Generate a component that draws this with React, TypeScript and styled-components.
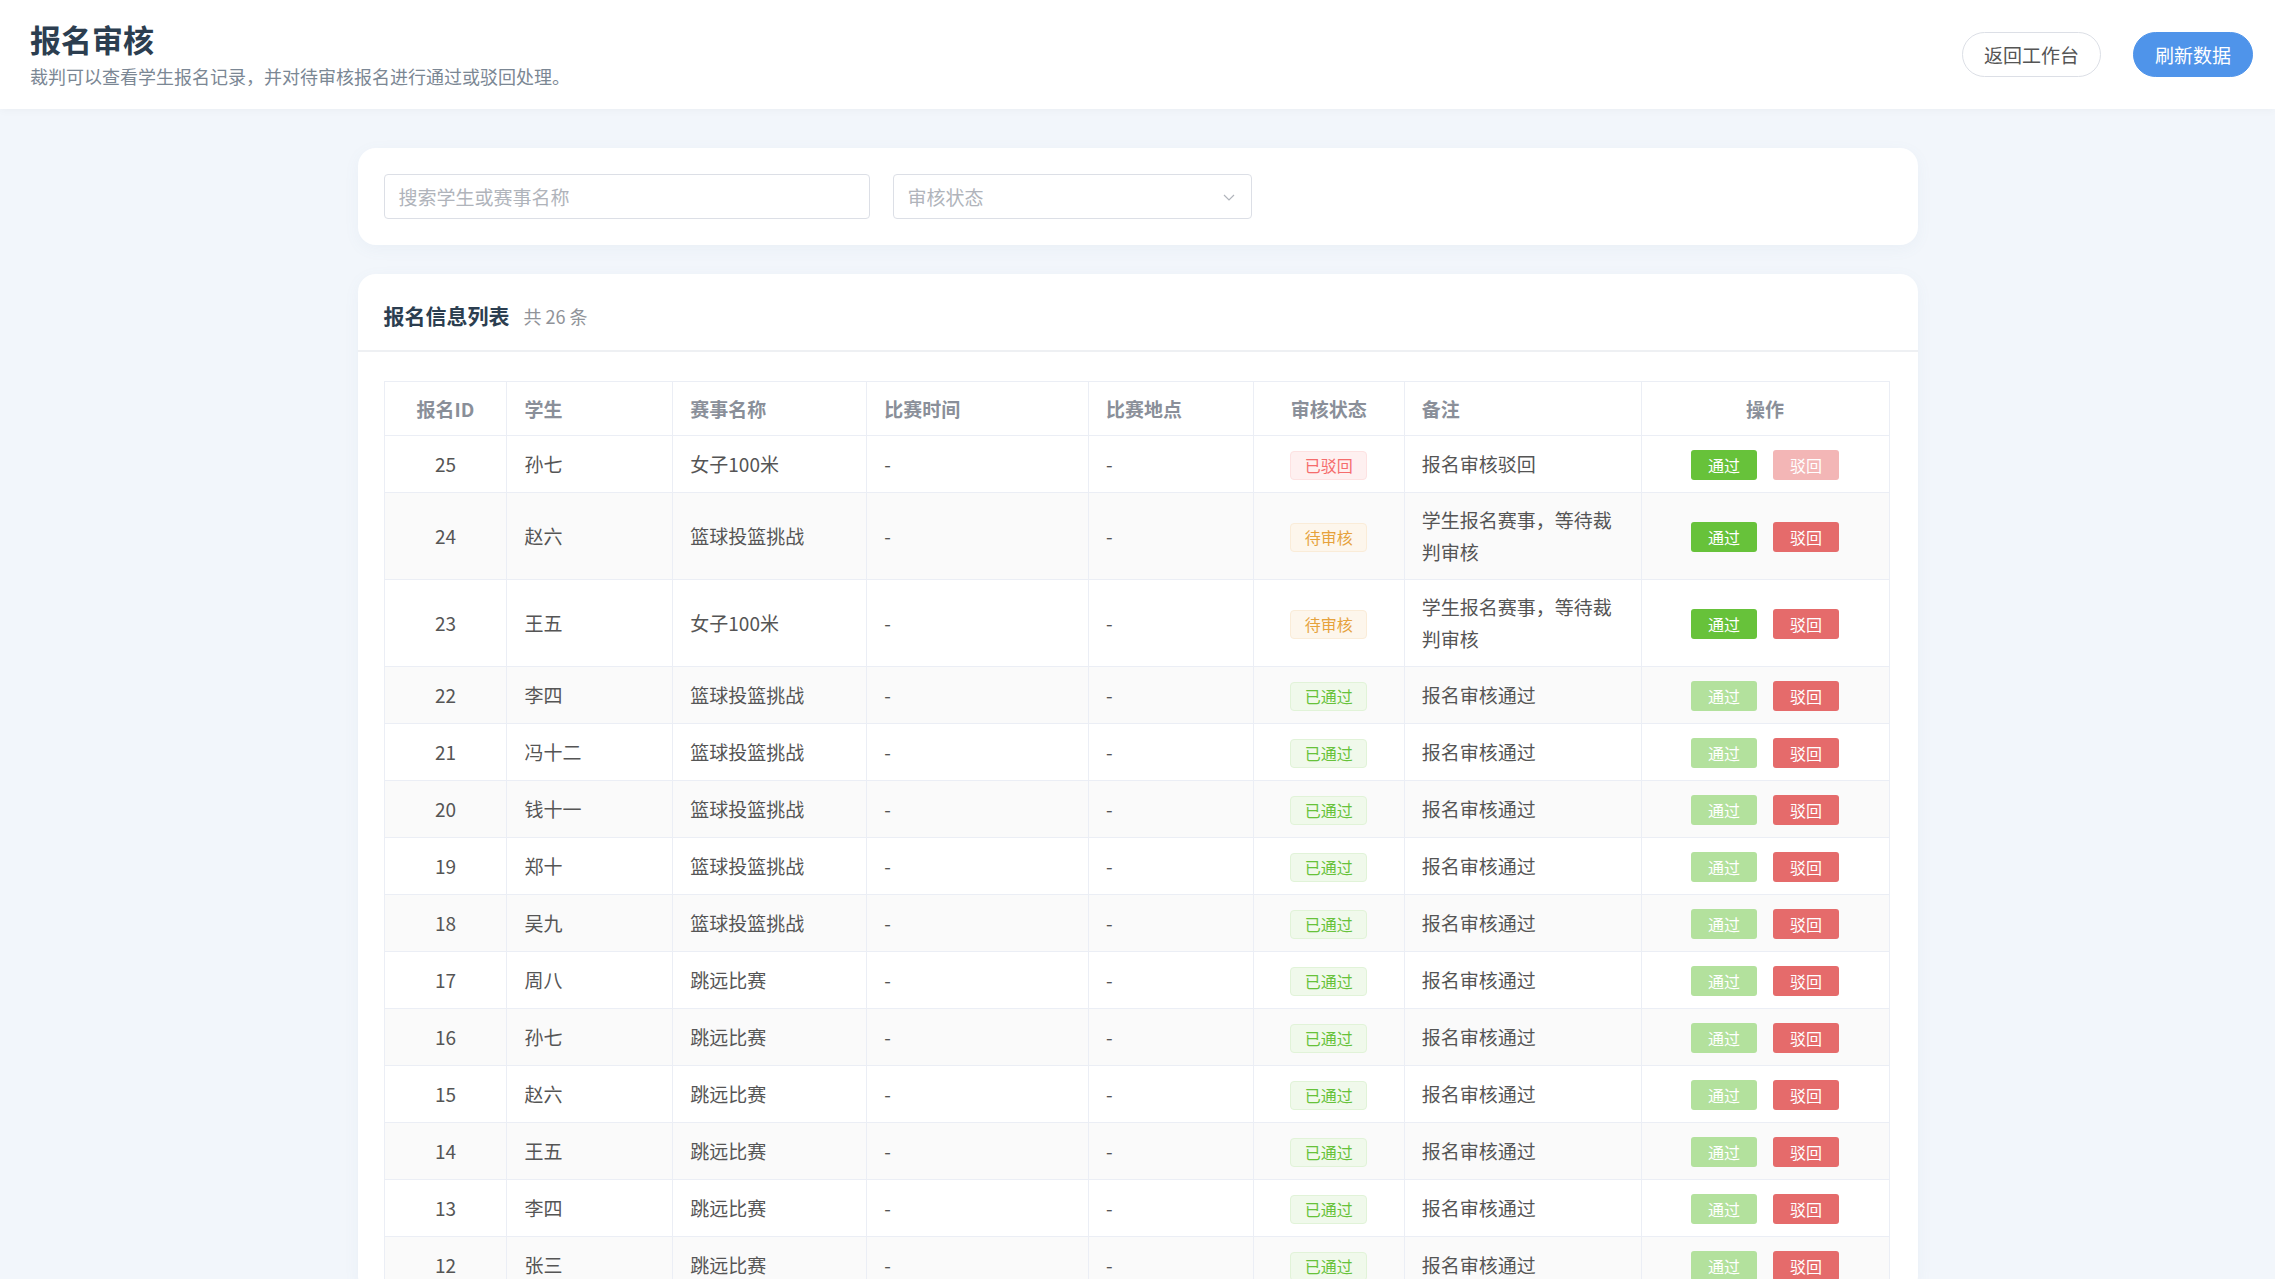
import React from "react";
import styled, { createGlobalStyle } from "styled-components";

const Global = createGlobalStyle`
  html, body { overflow: hidden; }
  body { margin: 0; background: #f2f6fb; font-family: "Noto Sans CJK SC", "Noto Sans", sans-serif; color: #303133; }
`;

const Header = styled.header`
  height: 109px; background: #fff; display: flex; align-items: center; justify-content: space-between;
  padding: 0 22px 0 30px; box-sizing: border-box; box-shadow: 0 2px 8px rgba(0,0,0,0.03);
`;
const Title = styled.h1`margin: 0 0 6px; font-size: 31px; font-weight: 700; color: #2c3e50; line-height: 1.2;`;
const Sub = styled.div`font-size: 18px; color: #7b8794;`;
const Btns = styled.div`display: flex; gap: 32px; align-items: center;`;
const Pill = styled.button<{ $primary?: boolean }>`
  height: 45px; border-radius: 23px; padding: 0 21px; font-size: 19px; font-family: inherit; cursor: pointer;
  border: 1px solid ${p => (p.$primary ? "#4f94ea" : "#dcdfe6")};
  background: ${p => (p.$primary ? "#4f94ea" : "#fff")}; color: ${p => (p.$primary ? "#fff" : "#555")};
`;
const Main = styled.main`width: 1560px; margin: 39px auto 0; display: flex; flex-direction: column; gap: 29px;`;
const Card = styled.section`background: #fff; border-radius: 18px; box-shadow: 0 4px 16px rgba(100,130,170,0.06);`;
const Filter = styled(Card)`display: flex; gap: 23px; padding: 26px 26px 26px;`;
const Input = styled.div<{ $w: number }>`
  width: ${p => p.$w}px; height: 45px; box-sizing: border-box; border: 1px solid #dcdfe6; border-radius: 4px;
  display: flex; align-items: center; justify-content: space-between; padding: 0 14px; font-size: 19px; color: #b0b4bb;
`;
const ListHead = styled.div`display: flex; align-items: baseline; gap: 14px; padding: 26px 26px 20px; border-bottom: 2px solid #eef0f3;`;
const ListTitle = styled.span`font-size: 21px; font-weight: 700; color: #2c3e50;`;
const Count = styled.span`font-size: 18px; color: #909399;`;
const TableWrap = styled.div`padding: 29px 26px 0;`;
const Table = styled.table`width: 1506px; border-collapse: collapse; font-size: 19px; color: #555; border: 1px solid #ebeef5;`;
const Th = styled.th<{ $c?: boolean }>`
  height: 53px; text-align: ${p => (p.$c ? "center" : "left")}; padding: 0 17px; font-weight: 700; color: #8a8f99;
  border: 1px solid #ebeef5; border-width: 0 1px 1px 0;
`;
const Tr = styled.tr<{ $alt: boolean }>`background: ${p => (p.$alt ? "#fafafa" : "#fff")};`;
const Td = styled.td<{ $c?: boolean; $tall?: boolean }>`
  height: ${p => (p.$tall ? 86 : 56)}px; padding: 0 17px; text-align: ${p => (p.$c ? "center" : "left")};
  border: 1px solid #ebeef5; border-width: 0 1px 1px 0; line-height: 32px;
`;
const tagColors: Record<string, [string, string, string]> = {
  已驳回: ["#fef0f0", "#fde2e2", "#f56c6c"],
  待审核: ["#fdf6ec", "#faecd8", "#e6a23c"],
  已通过: ["#f0f9eb", "#e1f3d8", "#67c23a"],
};
const Tag = styled.span<{ $s: string }>`
  display: inline-flex; align-items: center; justify-content: center; width: 77px; height: 29px; box-sizing: border-box;
  font-size: 16px; border-radius: 4px; background: ${p => tagColors[p.$s][0]}; border: 1px solid ${p => tagColors[p.$s][1]};
  color: ${p => tagColors[p.$s][2]};
`;
const Act = styled.button<{ $kind: "ok" | "no"; $off: boolean }>`
  width: 66px; height: 30px; border: none; border-radius: 3px; color: #fff; font-size: 16px; font-family: inherit; margin: 0 8px;
  background: ${p => (p.$kind === "ok" ? (p.$off ? "#b3e19d" : "#67c23a") : p.$off ? "#f3b6b6" : "#e56b6b")};
`;

const rows: [number, string, string, string, string][] = [
  [25, "孙七", "女子100米", "已驳回", "报名审核驳回"],
  [24, "赵六", "篮球投篮挑战", "待审核", "学生报名赛事，等待裁判审核"],
  [23, "王五", "女子100米", "待审核", "学生报名赛事，等待裁判审核"],
  [22, "李四", "篮球投篮挑战", "已通过", "报名审核通过"],
  [21, "冯十二", "篮球投篮挑战", "已通过", "报名审核通过"],
  [20, "钱十一", "篮球投篮挑战", "已通过", "报名审核通过"],
  [19, "郑十", "篮球投篮挑战", "已通过", "报名审核通过"],
  [18, "吴九", "篮球投篮挑战", "已通过", "报名审核通过"],
  [17, "周八", "跳远比赛", "已通过", "报名审核通过"],
  [16, "孙七", "跳远比赛", "已通过", "报名审核通过"],
  [15, "赵六", "跳远比赛", "已通过", "报名审核通过"],
  [14, "王五", "跳远比赛", "已通过", "报名审核通过"],
  [13, "李四", "跳远比赛", "已通过", "报名审核通过"],
  [12, "张三", "跳远比赛", "已通过", "报名审核通过"],
];
const widths = [123, 166, 194, 222, 165, 151, 237, 248];

export default function App() {
  return (
    <>
      <Global />
      <Header>
        <div>
          <Title>报名审核</Title>
          <Sub>裁判可以查看学生报名记录，并对待审核报名进行通过或驳回处理。</Sub>
        </div>
        <Btns>
          <Pill>返回工作台</Pill>
          <Pill $primary>刷新数据</Pill>
        </Btns>
      </Header>
      <Main>
        <Filter>
          <Input $w={486}>搜索学生或赛事名称</Input>
          <Input $w={359}>
            审核状态
            <svg width="16" height="16" viewBox="0 0 16 16"><path d="M3 6l5 5 5-5" fill="none" stroke="#b0b4bb" strokeWidth="1.2" /></svg>
          </Input>
        </Filter>
        <Card>
          <ListHead>
            <ListTitle>报名信息列表</ListTitle>
            <Count>共 26 条</Count>
          </ListHead>
          <TableWrap>
            <Table>
              <colgroup>{widths.map((w, i) => <col key={i} style={{ width: w }} />)}</colgroup>
              <thead>
                <tr>
                  <Th $c>报名ID</Th><Th>学生</Th><Th>赛事名称</Th><Th>比赛时间</Th><Th>比赛地点</Th>
                  <Th $c>审核状态</Th><Th>备注</Th><Th $c>操作</Th>
                </tr>
              </thead>
              <tbody>
                {rows.map(([id, s, e, st, note], i) => {
                  const tall = st === "待审核";
                  return (
                    <Tr key={id} $alt={i % 2 === 1}>
                      <Td $c $tall={tall}>{id}</Td>
                      <Td>{s}</Td>
                      <Td>{e}</Td>
                      <Td>-</Td>
                      <Td>-</Td>
                      <Td $c><Tag $s={st}>{st}</Tag></Td>
                      <Td>{note}</Td>
                      <Td $c>
                        <Act $kind="ok" $off={st === "已通过"}>通过</Act>
                        <Act $kind="no" $off={st === "已驳回"}>驳回</Act>
                      </Td>
                    </Tr>
                  );
                })}
              </tbody>
            </Table>
          </TableWrap>
        </Card>
      </Main>
    </>
  );
}
